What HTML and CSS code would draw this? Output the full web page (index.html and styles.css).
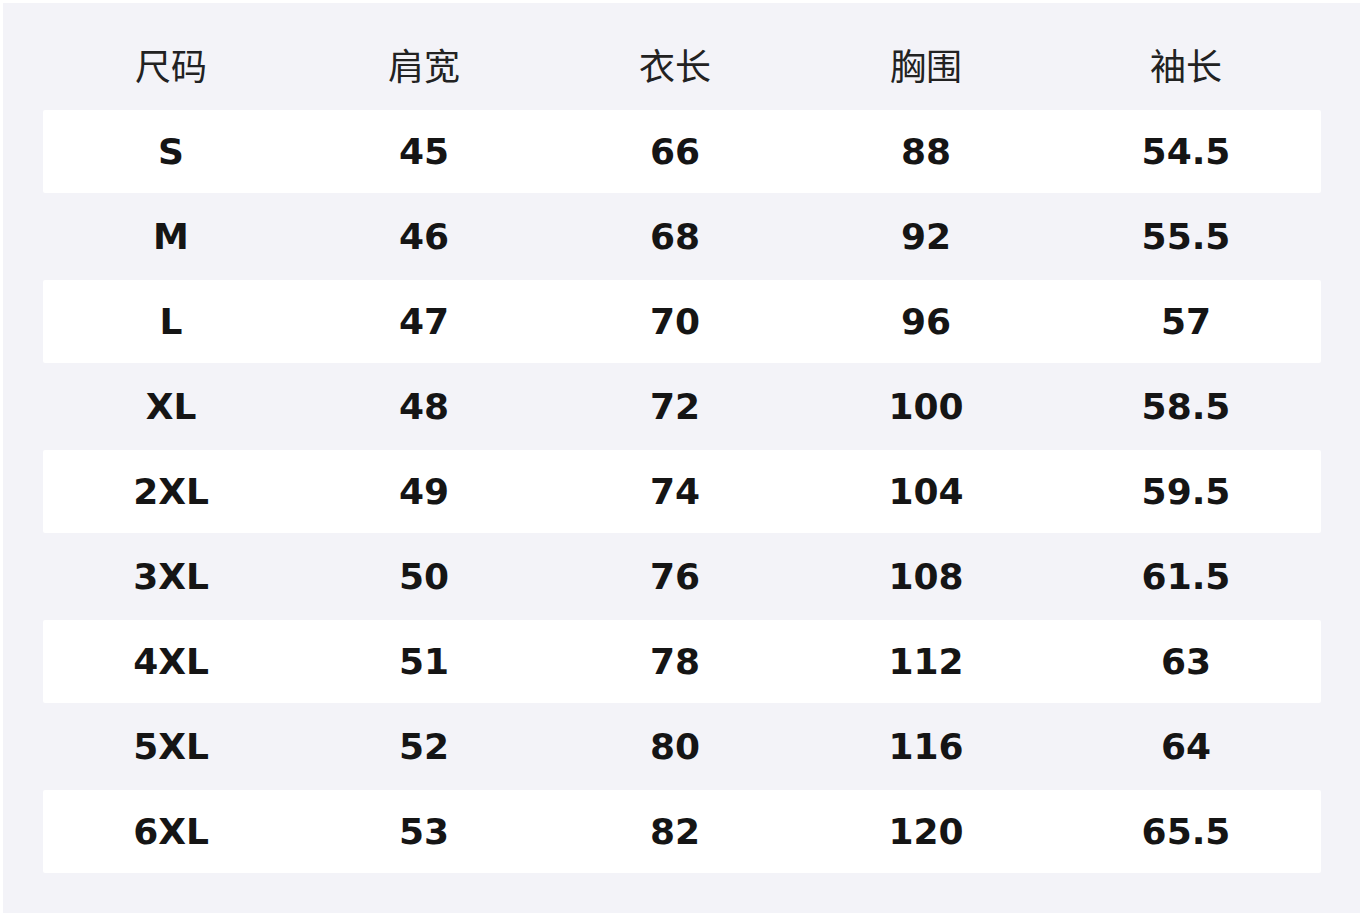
FILE: index.html
```html
<!DOCTYPE html>
<html lang="zh">
<head>
<meta charset="utf-8">
<title>尺码表</title>
<link rel="stylesheet" href="styles.css">
</head>
<body>
<div class="panel">
  <div class="row head">
    <div class="cell">尺码</div><div class="cell">肩宽</div><div class="cell">衣长</div><div class="cell">胸围</div><div class="cell">袖长</div>
  </div>
  <div class="rows">
    <div class="row white"><div class="cell">S</div><div class="cell">45</div><div class="cell">66</div><div class="cell">88</div><div class="cell">54.5</div></div>
    <div class="row"><div class="cell">M</div><div class="cell">46</div><div class="cell">68</div><div class="cell">92</div><div class="cell">55.5</div></div>
    <div class="row white"><div class="cell">L</div><div class="cell">47</div><div class="cell">70</div><div class="cell">96</div><div class="cell">57</div></div>
    <div class="row"><div class="cell">XL</div><div class="cell">48</div><div class="cell">72</div><div class="cell">100</div><div class="cell">58.5</div></div>
    <div class="row white"><div class="cell">2XL</div><div class="cell">49</div><div class="cell">74</div><div class="cell">104</div><div class="cell">59.5</div></div>
    <div class="row"><div class="cell">3XL</div><div class="cell">50</div><div class="cell">76</div><div class="cell">108</div><div class="cell">61.5</div></div>
    <div class="row white"><div class="cell">4XL</div><div class="cell">51</div><div class="cell">78</div><div class="cell">112</div><div class="cell">63</div></div>
    <div class="row"><div class="cell">5XL</div><div class="cell">52</div><div class="cell">80</div><div class="cell">116</div><div class="cell">64</div></div>
    <div class="row white"><div class="cell">6XL</div><div class="cell">53</div><div class="cell">82</div><div class="cell">120</div><div class="cell">65.5</div></div>
  </div>
</div>
</body>
</html>
```
FILE: styles.css
```css
html, body {
  margin: 0;
  background: #ffffff;
}
body {
  padding: 3px;
}
.panel {
  box-sizing: border-box;
  width: 1357px;
  height: 910px;
  background: #f3f3f8;
  padding: 22px 39px 0 40px;
  display: flex;
  flex-direction: column;
  gap: 2px;
}
.rows {
  display: flex;
  flex-direction: column;
  gap: 2px;
}
.row {
  display: grid;
  grid-template-columns: 256px 250px 252px 250px 270px;
  height: 83px;
  align-items: center;
  border-radius: 2px;
  font-family: "DejaVu Sans", sans-serif;
  font-weight: bold;
  font-size: 36px;
  color: #151515;
}
.row.white {
  background: #ffffff;
}
.row.head {
  box-sizing: border-box;
  padding-bottom: 6px;
  font-family: "Noto Sans CJK SC", "Noto Sans", sans-serif;
  font-weight: normal;
  font-size: 36px;
  color: #222222;
}
.cell {
  text-align: center;
  line-height: 1;
}
```
